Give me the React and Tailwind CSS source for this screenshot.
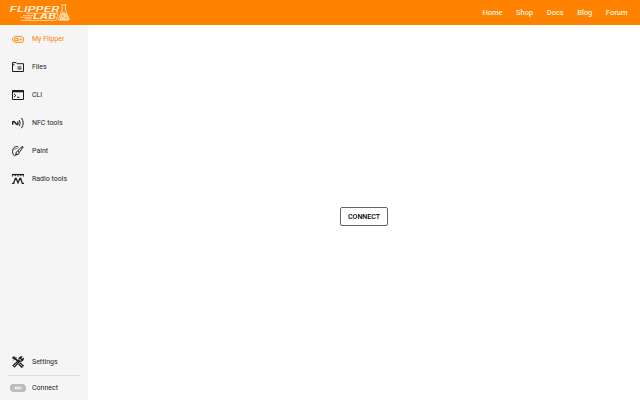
const FlipperIcon = () => (
  <svg viewBox="0 0 12 12" className="size-3" fill="none" stroke="currentColor" strokeWidth="0.9">
    <path d="M2.4 3.4H10L11.5 4.9V8L10.4 9.3H3L.6 7.6V5.2Z" />
    <rect x="2.8" y="5.3" width="3.2" height="2.1" />
    <circle cx="8.8" cy="6.3" r="0.8" />
  </svg>
);

const FilesIcon = () => (
  <svg viewBox="0 0 12 12" className="size-3" fill="none" stroke="currentColor" strokeWidth="1">
    <path d="M.5 10.5V1.6H4.2L5.2 2.7H11.5V10.5Z" />
    <path d="M.5 3.9H2.6M5.5 6H9.5M5.5 7.9H9.5" />
  </svg>
);

const CliIcon = () => (
  <svg viewBox="0 0 12 12" className="size-3" fill="none" stroke="currentColor" strokeWidth="1">
    <path d="M.5 1.5H11.5V10.5H.5Z" />
    <path d="M.5 2.3H11.5" strokeWidth="2" />
    <path d="M2 5L3.8 6.5L2 8M5 8.3H7.4" />
  </svg>
);

const NfcIcon = () => (
  <svg viewBox="0 0 12 12" className="size-3" fill="none" stroke="currentColor" strokeWidth="1">
    <path d="M.7 7.7V5Q1.8 3.9 2.8 5.3L4.2 7.1Q5.1 7.9 5.8 7V4.6" strokeWidth="1.4" />
    <path d="M7.2 3Q9.2 6 7.2 9.2M9.4 1Q13 6 9.4 11.2" />
  </svg>
);

const PaintIcon = () => (
  <svg viewBox="0 0 12 12" className="size-3" fill="none" stroke="currentColor" strokeWidth="1">
    <path d="M6.4 2C4.8.9 2.2 1.4 1.1 4.1C0 7 .7 10 2.4 10.6C3.6 11 4 10 3.7 8.8" />
    <path d="M11.2 1.9L7.3 7.4L5.6 5.9L10 1.7ZM5.6 5.9Q3.5 6.6 4.1 9.9Q7 10 7.3 7.4" />
    <path d="M3.1 3.2V4.4M4.9 2.8V3.8" />
  </svg>
);

const RadioIcon = () => (
  <svg viewBox="0 0 12 12" className="size-3" fill="none" stroke="currentColor">
    <path d="M0 1.6H12" strokeWidth="1.3" />
    <path d="M.6 2V3.6M3.3 2V3.2M6 2V3.6M8.7 2V3.2M11.4 2V3.6" strokeWidth="0.9" />
    <path d="M0 10.4H1.7L3.3 5.3H4.1L6 9.8L7.9 5.3H8.7L10.3 10.4H12" strokeWidth="1.3" />
  </svg>
);

const SettingsIcon = () => (
  <svg viewBox="0 0 12 12" className="size-3" fill="none" stroke="currentColor">
    <path d="M.6 .9L3.1 2.4L7 6.3" strokeWidth="1.8" />
    <path d="M7.3 7.3L10.9 11" strokeWidth="3.2" />
    <path d="M7.6 7.6L10.5 10.6" strokeWidth="0.8" stroke="#f5f5f5" />
    <path d="M1.1 9.5L7 4.2C6.5 2.4 7.8.7 9.6.8L8.4 2.3L9.6 3.6L11.2 2.5C11.4 4.3 9.8 5.5 8.1 5L2.5 10.9Z" strokeWidth="1.2" />
    <path d="M.5 3L3 .5M1.4 4.4L4.4 1.4" strokeWidth="1" />
  </svg>
);

const DeviceIcon = () => (
  <svg viewBox="0 0 16 8" className="h-2 w-4">
    <path d="M2 0H13.5L16 2.2V5.8L14.5 8H2.6L0 6V2Z" fill="#bdbdbd" />
    <path d="M4.2 4L6.3 2.1V3.2H7.3L8.4 1.8L9.4 3.2H11.8V4.8H9.4L8.4 6.2L7.3 4.8H6.3V5.9Z" fill="#f0f0f0" />
    <path d="M7.5 4H9.3" stroke="#bdbdbd" strokeWidth="0.6" />
  </svg>
);

const Logo = () => (
  <svg viewBox="0 0 64 20" className="h-5 w-16" fill="#ffefd8">
    <g fontFamily="Inter, Roboto, sans-serif" fontWeight="600" fontStyle="italic">
      <text x="1.5" y="8.8" fontSize="7" textLength="50" lengthAdjust="spacingAndGlyphs">FLIPPER</text>
      <text x="25" y="16.2" fontSize="7.6" fontWeight="700" textLength="23" lengthAdjust="spacingAndGlyphs">LAB</text>
    </g>
    <g fill="none" stroke="#ffefd8" strokeWidth="0.7">
      <path d="M18 10.2H50L48.2 17.4H13M15 12.4H25M12 14.2H24M17 15.8H23.5" />
      <path d="M53.3 1.8H58.2M54.2 2V7.2L50.3 15.8Q50 17.2 51.5 17.2H60Q61.8 17.2 61.1 15.5L57.4 7.2V2" strokeWidth="0.8" />
    </g>
    <path d="M53.5 9.8L56 9L59 11.5L61 16L60 17H51.2Z" opacity="0.75" />
    <path d="M54 13H56M57 15H59" stroke="#ff8200" strokeWidth="0.8" />
  </svg>
);

const items = [
  ["My Flipper", FlipperIcon],
  ["Files", FilesIcon],
  ["CLI", CliIcon],
  ["NFC tools", NfcIcon],
  ["Paint", PaintIcon],
  ["Radio tools", RadioIcon],
];

function NavItem({ label, Icon, active }) {
  return (
    <a className={`flex h-7 items-center gap-2 pl-3 ${active ? "text-[#ff8200]" : "text-[#1d1d1d]"}`}>
      <Icon />
      <span>{label}</span>
    </a>
  );
}

export default function App() {
  return (
    <div className="flex h-screen flex-col bg-white font-[Roboto,sans-serif] text-[7px] leading-none text-[#1d1d1d]">
      <header className="flex h-[25px] shrink-0 items-center justify-between bg-[#ff8200] pr-[12.5px] pl-2">
        <Logo />
        <nav className="flex gap-[13.5px] pt-px text-[7.5px] font-medium text-[#fff2df]">
          <a>Home</a>
          <a>Shop</a>
          <a>Docs</a>
          <a>Blog</a>
          <a>Forum</a>
        </nav>
      </header>
      <div className="flex min-h-0 flex-1">
        <aside className="flex w-[88px] flex-col justify-between bg-[#f5f5f5]">
          <nav>
            {items.map(([label, Icon], i) => (
              <NavItem key={label} label={label} Icon={Icon} active={i === 0} />
            ))}
          </nav>
          <div>
            <div className="translate-y-px">
              <NavItem label="Settings" Icon={SettingsIcon} />
            </div>
            <div className="mx-2 h-px bg-[#dedede]" />
            <div className="flex h-6 items-center gap-1.5 pl-2.5">
              <DeviceIcon />
              <span>Connect</span>
            </div>
          </div>
        </aside>
        <main className="flex flex-1 items-center justify-center pt-[7px]">
          <button className="h-[19px] w-[48px] rounded-xs border border-[#666] text-[7px] font-medium text-black">
            <span className="inline-block translate-y-[0.5px]">CONNECT</span>
          </button>
        </main>
      </div>
    </div>
  );
}
